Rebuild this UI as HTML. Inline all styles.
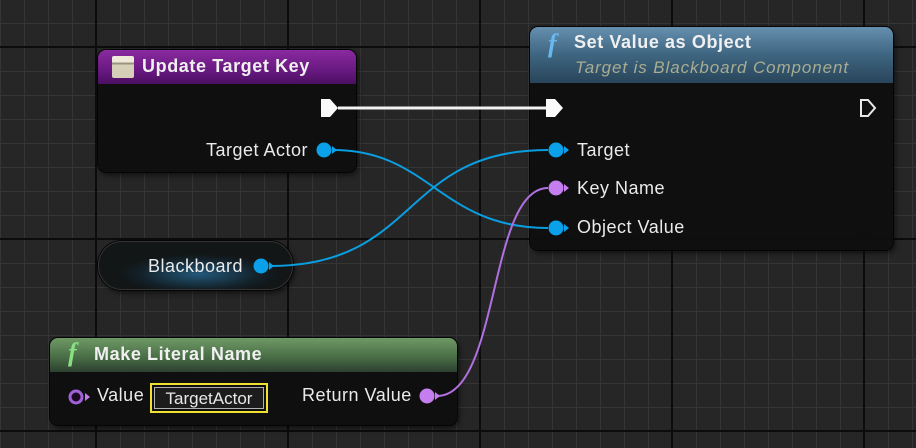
<!DOCTYPE html>
<html><head><meta charset="utf-8"><style>
*{margin:0;padding:0;box-sizing:border-box}
body{width:916px;height:448px;overflow:hidden;position:relative;font-family:"Liberation Sans","DejaVu Sans",sans-serif;
background-color:#262626;
background-image:
linear-gradient(to right,#0c0c0c 0,#0c0c0c 2px,transparent 2px),
linear-gradient(to bottom,#0c0c0c 0,#0c0c0c 2px,transparent 2px),
linear-gradient(to right,#353535 0,#353535 1px,transparent 1px),
linear-gradient(to bottom,#353535 0,#353535 1px,transparent 1px);
background-size:192px 192px,192px 192px,24px 24px,24px 24px;
background-position:95px 0,0 46px,0 0,0 23px;}
.node{position:absolute;background:rgba(14,15,14,0.96);border-radius:8px;box-shadow:0 0 0 1px #050505,2px 3px 6px rgba(0,0,0,.6);overflow:hidden}
.hdr{position:absolute;left:0;top:0;right:0;color:#f0f0f0;font-weight:bold;font-size:18px;letter-spacing:0.6px}
.t{position:absolute;color:#eaeaea;font-size:18px;letter-spacing:0.5px;white-space:nowrap}
svg{position:absolute;left:0;top:0}
</style></head><body>

<div class="node" style="left:98px;top:50px;width:258px;height:122px">
 <div class="hdr" style="height:34px;background:linear-gradient(#8a2aa0,#62167a 70%,#4a1060);">
  <div style="position:absolute;left:14px;top:6px;width:22px;height:22px;background:linear-gradient(#eee9d8 0,#eee9d8 30%,#9a9580 30%,#9a9580 38%,#d6d0b8 38%);border-radius:2px"></div>
  <span style="position:absolute;left:44px;top:6px">Update Target Key</span>
 </div>
 <span class="t" style="left:108px;top:90px">Target Actor</span>
</div>

<div class="node" style="left:530px;top:27px;width:363px;height:223px">
 <div class="hdr" style="height:56px;background:linear-gradient(#6690b0,#3e6580 50%,#28455a);">
  <span style="position:absolute;left:18px;top:2px;font-family:'Liberation Serif',serif;font-style:italic;font-size:26px;color:#68b8f0">f</span>
  <span style="position:absolute;left:44px;top:5px">Set Value as Object</span>
  <span style="position:absolute;left:45px;top:31px;font-weight:normal;font-style:italic;color:#a8ac90;font-size:17px;letter-spacing:0.9px">Target is Blackboard Component</span>
 </div>
 <span class="t" style="left:47px;top:113px">Target</span>
 <span class="t" style="left:47px;top:151px">Key Name</span>
 <span class="t" style="left:47px;top:190px">Object Value</span>
</div>

<div class="node" style="left:98px;top:241px;width:195px;height:49px;border-radius:24px;border:1px solid #333;background:radial-gradient(ellipse 80px 20px at 100px 32px,#22587a,rgba(18,32,40,0.95) 75%,#121617)">
 <span class="t" style="left:49px;top:14px">Blackboard</span>
</div>

<div class="node" style="left:50px;top:338px;width:407px;height:87px">
 <div class="hdr" style="height:34px;background:linear-gradient(#6e9a66,#476a44 60%,#2c4030);">
  <span style="position:absolute;left:18px;top:0px;font-family:'Liberation Serif',serif;font-style:italic;font-size:26px;color:#88e080">f</span>
  <span style="position:absolute;left:44px;top:6px">Make Literal Name</span>
 </div>
 <span class="t" style="left:47px;top:47px">Value</span>
 <div style="position:absolute;left:100px;top:45px;width:118px;height:30px;border:2px solid #f0e030;padding:2px"><div style="width:100%;height:100%;border:1px solid #b0b0b0;background:#1c1c1c;color:#e8e8e8;font-size:17px;text-align:center;line-height:22px">TargetActor</div></div>
 <span class="t" style="left:252px;top:47px">Return Value</span>
</div>

<svg width="916" height="448">
 <g fill="none" stroke-width="2">
  <path d="M338 108 L548 108" stroke="#f2f2f2" stroke-width="3"/>
  <path d="M333 150 C430 150 440 228 548 228" stroke="#0a9ee0"/>
  <path d="M270 266 C420 266 400 150 548 150" stroke="#0a9ee0"/>
  <path d="M437 396 C500 396 488 188 548 188" stroke="#b070e0"/>
 </g>
 <path d="M321 99 h9 l8 9 l-8 9 h-9 z" fill="#fafafa"/>
 <path d="M546 99 h9 l8 9 l-8 9 h-9 z" fill="#fafafa"/>
 <path d="M861 100 h7 l7 8 l-7 8 h-7 z" fill="none" stroke="#e8e8e8" stroke-width="2"/>
 <g fill="#0aa0ea">
  <circle cx="324" cy="150" r="7.5"/><path d="M332 146 l5 4 l-5 4z"/>
  <circle cx="556" cy="150" r="7.5"/><path d="M564 146 l5 4 l-5 4z"/>
  <circle cx="556" cy="228" r="7.5"/><path d="M564 224 l5 4 l-5 4z"/>
  <circle cx="261" cy="266" r="7.5"/><path d="M269 262 l5 4 l-5 4z"/>
 </g>
 <g fill="#c47ef0">
  <circle cx="556" cy="188" r="7.5"/><path d="M564 184 l5 4 l-5 4z"/>
  <circle cx="427" cy="396" r="7.5"/><path d="M435 392 l5 4 l-5 4z"/>
  <path d="M85 393 l5 4 l-5 4z"/>
 </g>
 <circle cx="76" cy="397" r="6" fill="#1a0a20" stroke="#a060d8" stroke-width="3"/>
</svg>
</body></html>
